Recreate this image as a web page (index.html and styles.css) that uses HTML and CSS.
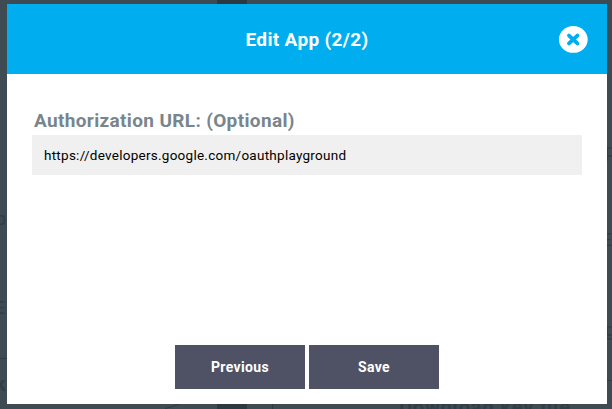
FILE: index.html
```
<!DOCTYPE html>
<html lang="en">
<head>
<meta charset="utf-8">
<title>Edit App</title>
<link rel="stylesheet" href="styles.css">
</head>
<body>
<div class="backdrop" aria-hidden="true">
  <svg width="612" height="409" viewBox="0 0 612 409">
    <path class="column" d="M217 0h30v409h-30z"/>
    <path class="line" d="M0 358.5h272M272.5 358v51M272 380.5h340M165 408.5q14-3 19-8"/>
    <g class="ghost">
      <text x="-4" y="225">p</text>
      <text x="-5" y="314">E</text>
      <text class="heading" x="-5" y="391">k</text>
      <text x="605" y="157">p</text>
      <text x="602" y="246">E</text>
      <text x="605" y="336">g</text>
      <text class="heading" x="399" y="414" textLength="171">Download key file</text>
    </g>
  </svg>
</div>
<main class="dialog">
  <header class="header">
    <h1 class="title">Edit App (2/2)</h1>
    <button class="close" aria-label="Close">
      <svg width="30" height="28" viewBox="0 0 30 28"><ellipse cx="15.3" cy="14.4" rx="14.4" ry="13.4" fill="#fff"/><path d="M11 10.6l8.4 7.8M19.4 10.6l-8.4 7.8" stroke="#00adef" stroke-width="3.8" stroke-linecap="round"/></svg>
    </button>
  </header>
  <form class="form">
    <label class="label" for="url">Authorization URL: (Optional)</label>
    <input class="field" id="url" type="text" value="https://developers.google.com/oauthplayground">
    <div class="actions">
      <button class="button previous" type="button">Previous</button>
      <button class="button save" type="button">Save</button>
    </div>
  </form>
</main>
</body>
</html>
```
FILE: styles.css
```
* { box-sizing: border-box; }
body {
  margin: 0;
  height: 409px;
  padding: 4px 5px 5px 7px;
  overflow: hidden;
  background: #3e4b53;
  font-family: Roboto, sans-serif;
}
.backdrop { position: absolute; inset: 0; }
.backdrop svg { display: block; }
.column { fill: #2d3941; }
.line { fill: none; stroke: #2f3b43; }
.ghost { fill: #323e46; font-size: 18px; }
.heading { font-size: 20px; font-weight: 700; }
.dialog {
  position: relative;
  display: flex;
  flex-direction: column;
  width: 600px;
  height: 400px;
  background: #fff;
}
.header {
  display: grid;
  grid-template-columns: 1fr auto 1fr;
  align-items: center;
  height: 70px;
  padding: 0 19px;
  background: #00adef;
}
.title {
  grid-column: 2;
  margin: 0;
  padding-top: 2px;
  color: #fff;
  font-size: 19px;
  line-height: 24px;
  font-weight: 700;
  letter-spacing: 0.35px;
}
.close {
  justify-self: end;
  width: 30px;
  height: 28px;
  padding: 0;
  border: 0;
  background: none;
}
.close svg { display: block; }
.form {
  flex: 1;
  display: flex;
  flex-direction: column;
  padding: 31px 25px 15px;
}
.label {
  height: 30px;
  padding-left: 2px;
  color: #78858c;
  font-size: 19px;
  line-height: 31px;
  font-weight: 700;
  letter-spacing: 0.35px;
  white-space: nowrap;
}
.field {
  width: 550px;
  height: 40px;
  padding: 0 12px;
  border: 0;
  border-radius: 0;
  background: #f0f0f0;
  color: #000;
  font: 13.5px Roboto, sans-serif;
  letter-spacing: 0.26px;
}
.actions {
  display: flex;
  justify-content: center;
  gap: 4px;
  margin-top: auto;
}
.button {
  width: 130px;
  height: 44px;
  padding: 0;
  border: 0;
  background: #4f5265;
  color: #fff;
  font: 700 14px Roboto, sans-serif;
  letter-spacing: 0.35px;
}
```
